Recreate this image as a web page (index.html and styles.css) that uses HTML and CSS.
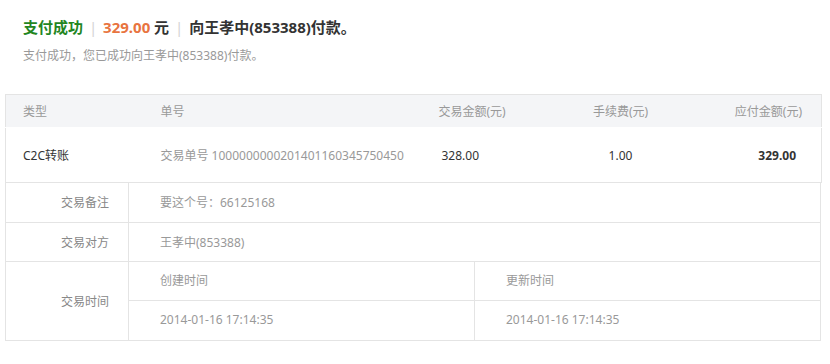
FILE: index.html
```html
<!DOCTYPE html>
<html lang="zh">
<head>
    <meta charset="UTF-8">
    <title>支付成功</title>
    <link rel="stylesheet" href="styles.css">
</head>
<body>
    <div class="container">
        <div class="result-head">
            <h1 class="result-title">
                <span class="ok">支付成功</span>
                <span class="sep">|</span>
                <span class="amount">329.00</span> 元
                <span class="sep">|</span>
                向王孝中(853388)付款。
            </h1>
            <p class="result-desc">支付成功，您已成功向王孝中(853388)付款。</p>
        </div>

        <table class="order-table">
            <colgroup>
                <col class="col-type">
                <col class="col-no">
                <col class="col-amount">
                <col class="col-fee">
                <col class="col-pay">
            </colgroup>
            <thead>
                <tr>
                    <th>类型</th>
                    <th>单号</th>
                    <th>交易金额(元)</th>
                    <th class="center">手续费(元)</th>
                    <th class="right">应付金额(元)</th>
                </tr>
            </thead>
            <tbody>
                <tr>
                    <td class="dark">C2C转账</td>
                    <td>交易单号 1000000000201401160345750450</td>
                    <td class="dark amount-cell">328.00</td>
                    <td class="dark center">1.00</td>
                    <td class="dark right total">329.00</td>
                </tr>
            </tbody>
        </table>

        <table class="detail-table">
            <tr>
                <th>交易备注</th>
                <td>要这个号：66125168</td>
            </tr>
            <tr>
                <th>交易对方</th>
                <td>王孝中(853388)</td>
            </tr>
            <tr>
                <th>交易时间</th>
                <td class="time-cell">
                    <div class="time-grid">
                        <div class="time-item">创建时间</div>
                        <div class="time-item">更新时间</div>
                        <div class="time-item">2014-01-16 17:14:35</div>
                        <div class="time-item">2014-01-16 17:14:35</div>
                    </div>
                </td>
            </tr>
        </table>
    </div>
</body>
</html>
```

FILE: styles.css
```css
* {
    margin: 0;
    padding: 0;
    box-sizing: border-box;
}

body {
    font-family: "Noto Sans", "Noto Sans CJK SC", sans-serif;
    font-size: 12px;
    color: #999;
    background: #fff;
}

.container {
    width: 826px;
    padding: 0 5px;
}

.result-head {
    padding: 17px 0 0 18px;
}

.result-title {
    font-size: 15px;
    line-height: 20px;
    font-weight: bold;
    color: #333;
}

.result-title .ok {
    color: #23861f;
}

.result-title .amount {
    color: #e8743f;
}

.result-title .sep {
    color: #d4d4d4;
    font-weight: normal;
    margin: 0 2px;
}

.result-desc {
    margin-top: 10px;
    line-height: 18px;
    color: #999;
}

table {
    width: 816px;
    border-collapse: collapse;
    table-layout: fixed;
}

.order-table {
    margin-top: 29px;
    border: 1px solid #e4e4e4;
}

.order-table th,
.order-table td {
    text-align: left;
    font-weight: normal;
    padding: 0 17px;
    white-space: nowrap;
}

.order-table th {
    height: 33px;
    background: #f4f5f7;
    color: #999;
}

.order-table td {
    height: 55px;
    border-top: 1px solid #fff;
}

.col-type { width: 138px; }
.col-no { width: 278px; }
.col-amount { width: 140px; }
.col-fee { width: 118px; }
.col-pay { width: 142px; }

.order-table .center { text-align: center; }
.order-table .right { text-align: right; padding-right: 19px; }

.dark { color: #333; }

.order-table .amount-cell { padding-left: 20px; }

.order-table .total {
    font-weight: bold;
    padding-right: 25px;
}

.detail-table {
    border: 1px solid #e4e4e4;
    border-top: 0;
}

.detail-table th,
.detail-table td {
    border: 1px solid #e4e4e4;
    height: 39px;
    font-weight: normal;
}

.detail-table tr:first-child th,
.detail-table tr:first-child td {
    border-top: 0;
}

.detail-table th {
    width: 123px;
    text-align: right;
    padding-right: 19px;
    color: #888;
}

.detail-table td {
    padding-left: 31px;
    color: #999;
}

.detail-table .time-cell {
    padding: 0;
}

.time-grid {
    display: grid;
    grid-template-columns: 346px 1fr;
}

.time-item {
    height: 39px;
    line-height: 38px;
    padding-left: 31px;
}

.time-item:nth-child(odd) {
    border-right: 1px solid #e4e4e4;
}

.time-item:nth-child(-n+2) {
    border-bottom: 1px solid #e4e4e4;
}
```
